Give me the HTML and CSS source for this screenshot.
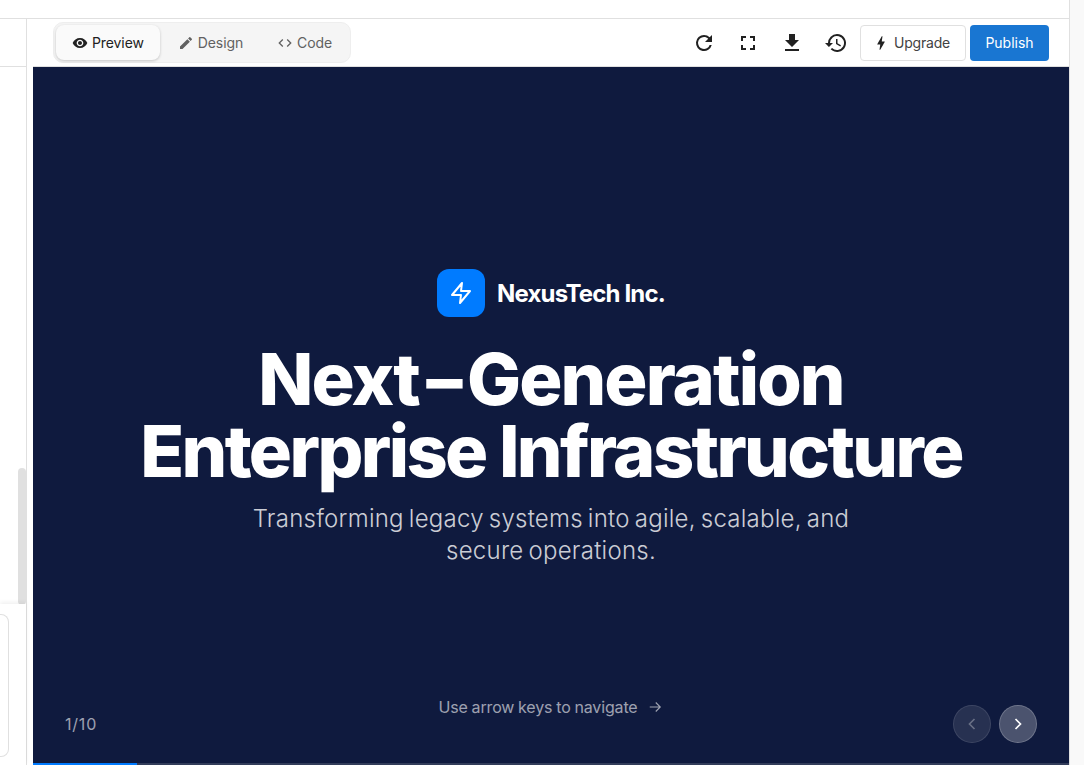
FILE: index.html
```html
<!DOCTYPE html>
<html lang="en">
  <head>
    <meta charset="UTF-8" />
    <meta name="viewport" content="width=device-width, initial-scale=1.0" />
    <title>NexusTech Inc. - Preview</title>
    <link rel="stylesheet" href="styles.css">
  </head>
  <body>
    <div class="app">
      <div class="topbar"></div>

      <div class="workspace">
        <!-- chat panel, cut off on the left -->
        <aside class="side-panel">
          <div class="side-head"></div>
          <div class="side-body">
            <div class="scroll-thumb"></div>
            <div class="composer-wrap">
              <div class="composer"></div>
            </div>
          </div>
        </aside>

        <section class="editor">
          <header class="toolbar">
            <div class="tabs">
              <button class="tab active">
                <svg viewBox="0 0 24 24" class="tab-icon"><path d="M12 4.5C7 4.5 2.73 7.61 1 12c1.73 4.39 6 7.5 11 7.5s9.27-3.11 11-7.5c-1.73-4.39-6-7.5-11-7.5zM12 17c-2.76 0-5-2.24-5-5s2.24-5 5-5 5 2.24 5 5-2.24 5-5 5zm0-8c-1.66 0-3 1.34-3 3s1.34 3 3 3 3-1.34 3-3-1.34-3-3-3z"/></svg>
                Preview
              </button>
              <button class="tab">
                <svg viewBox="0 0 24 24" class="tab-icon"><path d="M3 17.25V21h3.75L17.81 9.94l-3.75-3.75L3 17.25zM20.71 7.04a1 1 0 0 0 0-1.41l-2.34-2.34a1 1 0 0 0-1.41 0l-1.83 1.83 3.75 3.75 1.83-1.83z"/></svg>
                Design
              </button>
              <button class="tab">
                <svg viewBox="0 0 24 24" class="tab-icon"><path d="M9.4 16.6 4.8 12l4.6-4.6L8 6l-6 6 6 6 1.4-1.4zm5.2 0 4.6-4.6-4.6-4.6L16 6l6 6-6 6-1.4-1.4z"/></svg>
                Code
              </button>
            </div>

            <div class="actions">
              <button class="icon-btn">
                <svg viewBox="0 0 24 24"><path d="M17.65 6.35A7.95 7.95 0 0 0 12 4a8 8 0 1 0 7.73 10h-2.08A6 6 0 1 1 12 6c1.66 0 3.14.69 4.22 1.78L13 11h7V4l-2.35 2.35z"/></svg>
              </button>
              <button class="icon-btn">
                <svg viewBox="0 0 24 24"><path d="M7 14H5v5h5v-2H7v-3zM5 10h2V7h3V5H5v5zm12 7h-3v2h5v-5h-2v3zM14 5v2h3v3h2V5h-5z"/></svg>
              </button>
              <button class="icon-btn">
                <svg viewBox="0 0 24 24"><path d="M19 9h-4V3H9v6H5l7 7 7-7zM5 18v2h14v-2H5z"/></svg>
              </button>
              <button class="icon-btn">
                <svg viewBox="0 0 24 24"><path d="M13 3a9 9 0 0 0-9 9H1l3.89 3.89.07.14L9 12H6a7 7 0 1 1 2.05 4.95l-1.42 1.42A9 9 0 1 0 13 3zm-1 5v5l4.28 2.54.72-1.21-3.5-2.08V8H12z"/></svg>
              </button>
              <button class="btn-upgrade">
                <svg viewBox="0 0 24 24" class="bolt"><path d="M11 21h-1l1-7H7.5c-.88 0-.33-.75-.31-.78C8.48 10.94 10.42 7.54 13.01 3h1l-1 7h3.51c.4 0 .62.19.4.66C12.97 17.55 11 21 11 21z"/></svg>
                Upgrade
              </button>
              <button class="btn-publish">Publish</button>
            </div>
          </header>

          <main class="slide">
            <div class="slide-content">
              <div class="brand">
                <div class="brand-mark">
                  <svg viewBox="0 0 24 24"><path d="M13 2 3 14h9l-1 8 10-12h-9l1-8z"/></svg>
                </div>
                <span class="brand-name">NexusTech Inc.</span>
              </div>
              <h1><span class="line-one">Next<span class="dash">-</span>Generation</span><br />Enterprise Infrastructure</h1>
              <p class="subtitle">Transforming legacy systems into agile, scalable, and secure operations.</p>
            </div>

            <div class="slide-count">1/10</div>
            <div class="slide-hint">
              Use arrow keys to navigate
              <svg viewBox="0 0 24 24"><path d="M5 12h14M13 6l6 6-6 6"/></svg>
            </div>
            <div class="slide-nav">
              <button class="nav-btn prev"><svg viewBox="0 0 24 24"><path d="m15 18-6-6 6-6"/></svg></button>
              <button class="nav-btn next"><svg viewBox="0 0 24 24"><path d="m9 18 6-6-6-6"/></svg></button>
            </div>
            <div class="progress"><div class="progress-bar"></div></div>
          </main>
        </section>
      </div>
    </div>
    <div class="right-strip"></div>
  </body>
</html>
```

FILE: styles.css
```css
* {
  margin: 0;
  padding: 0;
  box-sizing: border-box;
}

html,
body {
  height: 100%;
  overflow: hidden;
}

body {
  font-family: Inter, Arial, sans-serif;
  background-color: #fff;
  display: flex;
}

button {
  font-family: inherit;
  border: none;
  background: none;
  cursor: pointer;
}

.app {
  flex: 1;
  min-width: 0;
  display: flex;
  flex-direction: column;
}

.topbar {
  height: 19px;
  flex-shrink: 0;
  background-color: #fff;
  border-bottom: 1px solid #e0e0e0;
}

.workspace {
  flex: 1;
  display: flex;
  min-height: 0;
}

/* left panel */
.side-panel {
  width: 27px;
  flex-shrink: 0;
  display: flex;
  flex-direction: column;
  border-right: 1px solid #e0e0e0;
}

.side-head {
  height: 48px;
  flex-shrink: 0;
  border-bottom: 1px solid #e0e0e0;
}

.side-body {
  flex: 1;
  position: relative;
}

.scroll-thumb {
  position: absolute;
  top: 401px;
  right: 0;
  width: 8px;
  height: 137px;
  background-color: #e0e0e0;
  border-radius: 4px;
}

.composer-wrap {
  position: absolute;
  left: 0;
  right: 0;
  bottom: 0;
  height: 161px;
  padding: 10px 17px 8px 0;
  background-color: #fff;
  box-shadow: 0 -2px 4px rgba(0, 0, 0, 0.06);
}

.composer {
  height: 100%;
  border: 1px solid #e0e0e0;
  border-left: none;
  border-radius: 0 8px 8px 0;
}

/* toolbar + slide column */
.editor {
  flex: 1;
  min-width: 0;
  margin-left: 6px;
  display: flex;
  flex-direction: column;
}

.toolbar {
  height: 48px;
  flex-shrink: 0;
  display: flex;
  justify-content: space-between;
  align-items: center;
  padding: 0 20px 0 20px;
  background-color: #fff;
  border-bottom: 1px solid #e0e0e0;
}

.tabs {
  display: flex;
  align-items: center;
  gap: 2px;
  height: 41px;
  padding: 2px;
  background-color: #f5f5f5;
  border: 1px solid #eeeeee;
  border-radius: 10px;
}

.tab {
  display: flex;
  align-items: center;
  justify-content: center;
  gap: 4px;
  height: 35px;
  padding: 0 16px;
  font-size: 14px;
  letter-spacing: -0.1px;
  color: #616161;
  border-radius: 8px;
}

.tab.active {
  color: #212121;
  background-color: #fafafa;
  box-shadow: 0 1px 3px rgba(0, 0, 0, 0.2);
}

.tab-icon {
  width: 16px;
  height: 16px;
  fill: currentColor;
}

.actions {
  display: flex;
  align-items: center;
}

.icon-btn {
  width: 44px;
  height: 36px;
  display: flex;
  align-items: center;
  justify-content: center;
}

.icon-btn svg {
  width: 24px;
  height: 24px;
  fill: #212121;
}

.btn-upgrade {
  display: flex;
  align-items: center;
  justify-content: center;
  gap: 4px;
  width: 106px;
  height: 36px;
  margin-left: 2px;
  padding-right: 4px;
  font-size: 14px;
  letter-spacing: -0.2px;
  color: #424242;
  background-color: #fff;
  border: 1px solid #e0e0e0;
  border-radius: 4px;
}

.bolt {
  width: 18px;
  height: 18px;
  fill: #212121;
}

.btn-publish {
  width: 79px;
  height: 36px;
  margin-left: 4px;
  font-size: 14px;
  color: #fff;
  background-color: #1976d2;
  border-radius: 4px;
}

/* slide */
.slide {
  flex: 1;
  position: relative;
  min-height: 0;
  background-color: #0f1a3e;
  color: #fff;
  display: flex;
  align-items: center;
  justify-content: center;
}

.slide-content {
  display: flex;
  flex-direction: column;
  align-items: center;
  text-align: center;
  margin-top: 4px;
}

.brand {
  display: flex;
  align-items: center;
  gap: 12px;
  margin-bottom: 26px;
}

.brand-mark {
  width: 48px;
  height: 48px;
  display: flex;
  align-items: center;
  justify-content: center;
  background-color: #007bff;
  border-radius: 12px;
}

.brand-mark svg {
  width: 24px;
  height: 24px;
  fill: none;
  stroke: #fff;
  stroke-width: 2;
  stroke-linejoin: round;
}

.brand-name {
  font-size: 24px;
  font-weight: 700;
  letter-spacing: -0.85px;
}

h1 {
  font-size: 72px;
  line-height: 72px;
  font-weight: 800;
  letter-spacing: -2.6px;
  margin-bottom: 16px;
}

.line-one {
  letter-spacing: -1.9px;
}

.dash {
  display: inline-block;
  margin: 0 8px;
  transform: scaleX(1.5);
}

.subtitle {
  width: 640px;
  font-size: 24px;
  line-height: 32px;
  font-weight: 300;
  letter-spacing: 0.25px;
  word-spacing: -2px;
  color: rgba(255, 255, 255, 0.8);
}

.slide-count {
  position: absolute;
  left: 32px;
  bottom: 31px;
  font-size: 16px;
  letter-spacing: 0.8px;
  color: rgba(255, 255, 255, 0.6);
}

.slide-hint {
  position: absolute;
  left: 0;
  right: 0;
  bottom: 48px;
  display: flex;
  align-items: center;
  justify-content: center;
  gap: 8px;
  font-size: 16px;
  color: rgba(255, 255, 255, 0.6);
  letter-spacing: -0.15px;
  word-spacing: -0.5px;
}

.slide-hint svg {
  width: 18px;
  height: 18px;
  fill: none;
  stroke: currentColor;
  stroke-width: 1.5;
}

.slide-nav {
  position: absolute;
  right: 32px;
  bottom: 22px;
  display: flex;
  gap: 8px;
}

.nav-btn {
  width: 38px;
  height: 38px;
  display: flex;
  align-items: center;
  justify-content: center;
  border-radius: 50%;
  border: 1px solid rgba(255, 255, 255, 0.1);
  background-color: rgba(255, 255, 255, 0.1);
}

.nav-btn svg {
  width: 20px;
  height: 20px;
  fill: none;
  stroke: #fff;
  stroke-width: 2;
}

.nav-btn.prev svg {
  opacity: 0.3;
}

.nav-btn.next {
  background-color: rgba(255, 255, 255, 0.25);
  border-color: rgba(255, 255, 255, 0.2);
}

.progress {
  position: absolute;
  left: 0;
  right: 0;
  bottom: 0;
  height: 2px;
  background-color: rgba(255, 255, 255, 0.15);
}

.progress-bar {
  width: 10%;
  height: 100%;
  background-color: #007bff;
}

.right-strip {
  width: 15px;
  flex-shrink: 0;
  background-color: #f9f9f9;
  border-left: 1px solid #e0e0e0;
}
```
